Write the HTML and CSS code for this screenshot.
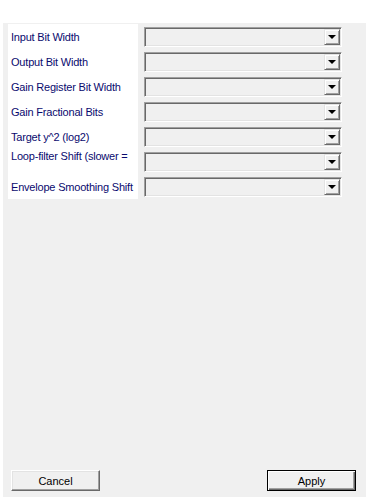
FILE: index.html
```html
<!DOCTYPE html>
<html lang="en">
<head>
  <meta charset="UTF-8" />
  <title>AGC Settings</title>
  <link rel="stylesheet" href="styles.css">
</head>
<body>

  <!-- Settings dialog -->
  <div class="window">
    <div class="fields">
      <div class="label">Input Bit Width</div>
      <div class="cell"><div class="combo"><span class="drop"></span></div></div>

      <div class="label">Output Bit Width</div>
      <div class="cell"><div class="combo"><span class="drop"></span></div></div>

      <div class="label">Gain Register Bit Width</div>
      <div class="cell"><div class="combo"><span class="drop"></span></div></div>

      <div class="label">Gain Fractional Bits</div>
      <div class="cell"><div class="combo"><span class="drop"></span></div></div>

      <div class="label">Target y^2 (log2)</div>
      <div class="cell"><div class="combo"><span class="drop"></span></div></div>

      <div class="label label-top">Loop-filter Shift (slower =</div>
      <div class="cell"><div class="combo"><span class="drop"></span></div></div>

      <div class="label">Envelope Smoothing Shift</div>
      <div class="cell"><div class="combo"><span class="drop"></span></div></div>
    </div>

    <!-- Buttons -->
    <div class="footer">
      <button class="btn">Cancel</button>
      <button class="btn btn-default">Apply</button>
    </div>
  </div>

</body>
</html>
```

FILE: styles.css
```css
/* Base */
body {
  margin: 0;
  padding: 0;
  background: #fff;
  font-family: 'Liberation Sans', Arial, sans-serif;
  font-size: 11px;
}

.window {
  margin: 23px 0 0 3px;
  width: 363px;
  height: 474px;
  background: #f0f0f0;
  display: flex;
  flex-direction: column;
  box-sizing: border-box;
  padding: 1px 0 6px 5px;
}

/* Form grid */
.fields {
  display: grid;
  grid-template-columns: 130px 198px;
  grid-auto-rows: 25px;
  column-gap: 6px;
}

.label {
  background: #fff;
  color: #0a0a6e;
  padding-left: 3px;
  display: flex;
  align-items: center;
  white-space: nowrap;
  overflow: hidden;
  letter-spacing: -0.2px;
}

.label-top {
  align-items: flex-start;
  padding-top: 1px;
}

.cell {
  padding-top: 3px;
}

.combo {
  position: relative;
  height: 20px;
  box-sizing: border-box;
  background: #f0f0f0;
  border: 1px solid;
  border-color: #a0a0a0 #fff #fff #a0a0a0;
  box-shadow: inset 1px 1px #696969, inset -1px -1px #e3e3e3;
}

.drop {
  position: absolute;
  right: 1px;
  top: 1px;
  width: 16px;
  height: 16px;
  box-sizing: border-box;
  background: #f0f0f0;
  border: 1px solid;
  border-color: #e3e3e3 #696969 #696969 #e3e3e3;
  box-shadow: inset 1px 1px #fff, inset -1px -1px #a0a0a0;
}

.drop::after {
  content: '';
  position: absolute;
  left: 3px;
  top: 5px;
  border-left: 4px solid transparent;
  border-right: 4px solid transparent;
  border-top: 4px solid #000;
}

/* Footer buttons */
.footer {
  margin-top: auto;
  display: flex;
  justify-content: space-between;
  padding: 0 10px 0 3px;
}

.btn {
  width: 89px;
  height: 21px;
  margin: 0;
  padding: 0;
  font-family: 'Liberation Sans', Arial, sans-serif;
  font-size: 11px;
  color: #000;
  background: #f0f0f0;
  border: 1px solid;
  border-color: #fff #696969 #696969 #fff;
  box-shadow: inset -1px -1px #a0a0a0, inset 1px 1px #e3e3e3;
}

.btn-default {
  border: 1px solid #000;
  box-shadow: inset 1px 1px #fff, inset -1px -1px #696969, inset -2px -2px #a0a0a0;
}
```
